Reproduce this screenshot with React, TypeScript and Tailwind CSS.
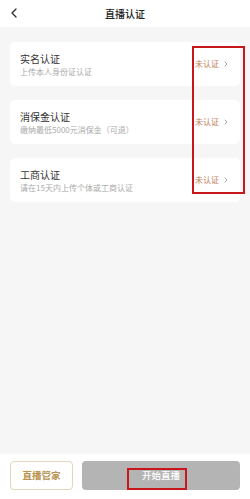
import { ChevronLeft, ChevronRight } from 'lucide-react'

const items = [
  { title: '实名认证', desc: '上传本人身份证认证' },
  { title: '消保金认证', desc: '缴纳最低5000元消保金（可退）' },
  { title: '工商认证', desc: '请在15天内上传个体或工商认证' },
]

export default function App() {
  return (
    <div
      className="relative flex h-[499px] w-[250px] flex-col bg-white"
      style={{ fontFamily: '"Noto Sans CJK SC", "Noto Sans", sans-serif' }}
    >
      <div className="relative flex h-[27px] items-center justify-center bg-white">
        <ChevronLeft className="absolute left-[6px] top-[5px] h-[16px] w-[16px] text-[#333]" strokeWidth={2} />
        <span className="text-[10px] font-medium text-[#222]">直播认证</span>
      </div>

      <div className="flex flex-1 flex-col gap-[14px] bg-[#f6f6f6] px-[10px] pt-[15px]">
        {items.map((item) => (
          <div
            key={item.title}
            className="flex h-[44px] items-center justify-between rounded-[5px] bg-white pl-[10px] pr-[10px]"
          >
            <div className="flex flex-col">
              <span className="text-[10px] leading-[15px] text-[#333]">{item.title}</span>
              <span className="text-[8px] leading-[12px] text-[#aaa]">{item.desc}</span>
            </div>
            <div className="flex items-center gap-[3px] text-[8px] text-[#c47d57]">
              <span>未认证</span>
              <ChevronRight className="h-[8px] w-[8px] text-[#777]" strokeWidth={2} />
            </div>
          </div>
        ))}
      </div>

      <div className="flex h-[45px] items-center gap-[9px] bg-white px-[10px] pb-[2px]">
        <button className="flex h-[29px] w-[63px] items-center justify-center rounded-[4px] border border-[#e2d6be] text-[9.5px] font-bold text-[#b8924e]">
          直播管家
        </button>
        <button className="flex h-[29px] flex-1 items-center justify-center rounded-[4px] bg-[#b4b4b4] text-[9.5px] font-medium text-white">
          开始直播
        </button>
      </div>

      {/* annotation boxes */}
      <div className="absolute left-[192px] top-[46px] h-[148px] w-[53px] border-2 border-[#c8161d]" />
      <div className="absolute left-[127px] top-[468px] h-[22px] w-[60px] border-2 border-[#c8161d]" />
    </div>
  )
}
